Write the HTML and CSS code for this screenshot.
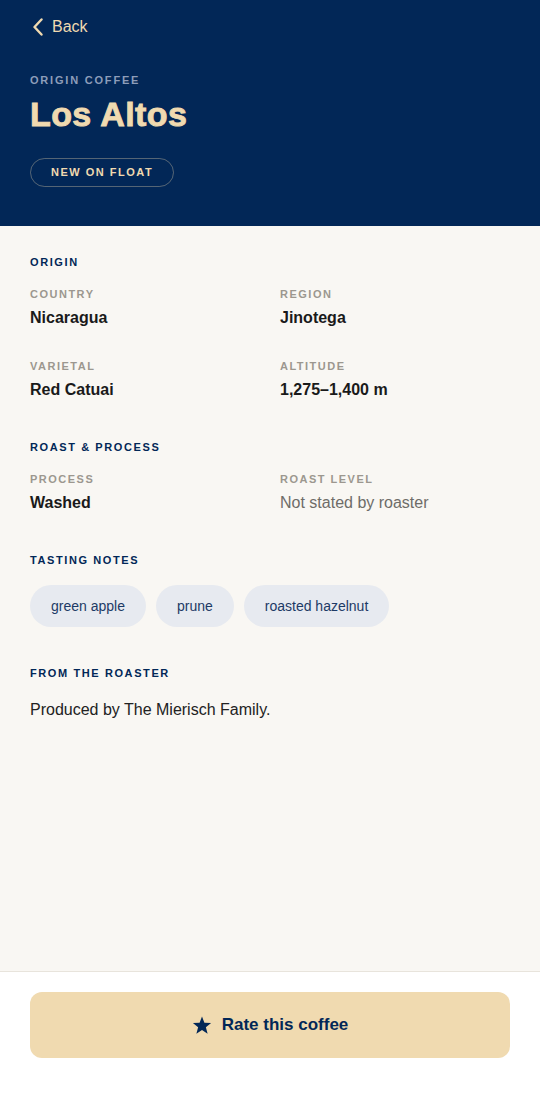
FILE: index.html
```html
<!doctype html>
<html>
<head>
<meta charset="utf-8">
<title>Los Altos</title>
<link rel="stylesheet" href="styles.css">
</head>
<body>
<div class="page">
	<div class="hero">
		<a href="javascript:;" class="back">
			<svg width="12" height="18" viewBox="0 0 12 18"><path d="M9.5 1.5 L2.5 9 L9.5 16.5" fill="none" stroke="#f0dab0" stroke-width="2.4" stroke-linecap="round" stroke-linejoin="round"/></svg>
			<span>Back</span>
		</a>
		<p class="kicker">ORIGIN COFFEE</p>
		<h1>Los Altos</h1>
		<span class="badge">NEW ON FLOAT</span>
	</div>

	<div class="main">
		<h2>ORIGIN</h2>
		<div class="grid">
			<div>
				<p class="label">COUNTRY</p>
				<p class="value">Nicaragua</p>
			</div>
			<div>
				<p class="label">REGION</p>
				<p class="value">Jinotega</p>
			</div>
			<div>
				<p class="label">VARIETAL</p>
				<p class="value">Red Catuai</p>
			</div>
			<div>
				<p class="label">ALTITUDE</p>
				<p class="value">1,275–1,400 m</p>
			</div>
		</div>

		<h2>ROAST &amp; PROCESS</h2>
		<div class="grid">
			<div>
				<p class="label">PROCESS</p>
				<p class="value">Washed</p>
			</div>
			<div>
				<p class="label">ROAST LEVEL</p>
				<p class="value muted">Not stated by roaster</p>
			</div>
		</div>

		<h2>TASTING NOTES</h2>
		<ul class="notes">
			<li>green apple</li>
			<li>prune</li>
			<li>roasted hazelnut</li>
		</ul>

		<h2>FROM THE ROASTER</h2>
		<p class="about">Produced by The Mierisch Family.</p>
	</div>

	<div class="footer">
		<a href="javascript:;" class="rate">
			<svg width="20" height="19" viewBox="0 0 24 23"><path d="M12 0.5 L14.9 8.1 L23 8.5 L16.7 13.6 L18.8 21.5 L12 17 L5.2 21.5 L7.3 13.6 L1 8.5 L9.1 8.1 Z" fill="#022757"/></svg>
			<span>Rate this coffee</span>
		</a>
	</div>
</div>
</body>
</html>
```

FILE: styles.css
```css
*{margin:0; padding:0; list-style:none; box-sizing:border-box;}
body{font-family:"Liberation Sans", Arial, sans-serif; background:#fff; color:#1a1a1a;}
.page{min-height:100vh; display:flex; flex-direction:column;}

.hero{background:#022757; padding:0 30px 39px;}
.back{height:53px; display:flex; align-items:center; gap:8px; color:#f0dab0; text-decoration:none; font-size:16px; margin-left:2px;}
.back svg{display:block;}
.kicker{margin-top:20px; font-size:11px; line-height:14px; font-weight:bold; letter-spacing:1.8px; color:#8d9dba;}
h1{margin-top:7px; font-size:34px; line-height:40px; font-weight:900; color:#f0dab0; letter-spacing:0.4px; -webkit-text-stroke:0.9px #f0dab0;}
.badge{display:inline-block; margin-top:24px; padding:7px 20px; border:1px solid rgba(240,218,176,0.35); border-radius:15px; font-size:11px; line-height:13px; font-weight:bold; letter-spacing:1.5px; color:#f0dab0;}

.main{flex:1; background:#f9f7f3; padding:29px 30px 40px;}
h2{font-size:11px; line-height:14px; font-weight:bold; letter-spacing:1.6px; color:#022757; margin-bottom:18px;}
.grid{display:grid; grid-template-columns:1fr 1fr; column-gap:20px; row-gap:30px; margin-bottom:39px;}
.label{font-size:11px; line-height:14px; font-weight:bold; letter-spacing:1.5px; color:#9c978f; margin-bottom:6px;}
.value{font-size:16px; line-height:22px; font-weight:bold; color:#1a1a1a;}
.value.muted{font-weight:normal; color:#6e6c68;}

.notes{display:flex; gap:10px; margin-bottom:39px;}
.notes li{height:42px; line-height:42px; padding:0 21px; border-radius:21px; background:#e7eaf0; color:#1d3a66; font-size:14px;}
.about{font-size:16px; line-height:24px; color:#222; margin-top:1px;}

.footer{background:#fff; border-top:1px solid #e8e4dc; padding:20px 30px 52px;}
.rate{height:66px; border-radius:12px; background:#f0dab0; display:flex; align-items:center; justify-content:center; gap:10px; color:#022757; text-decoration:none; font-size:17px; font-weight:bold;}
.rate svg{display:block;}
```
